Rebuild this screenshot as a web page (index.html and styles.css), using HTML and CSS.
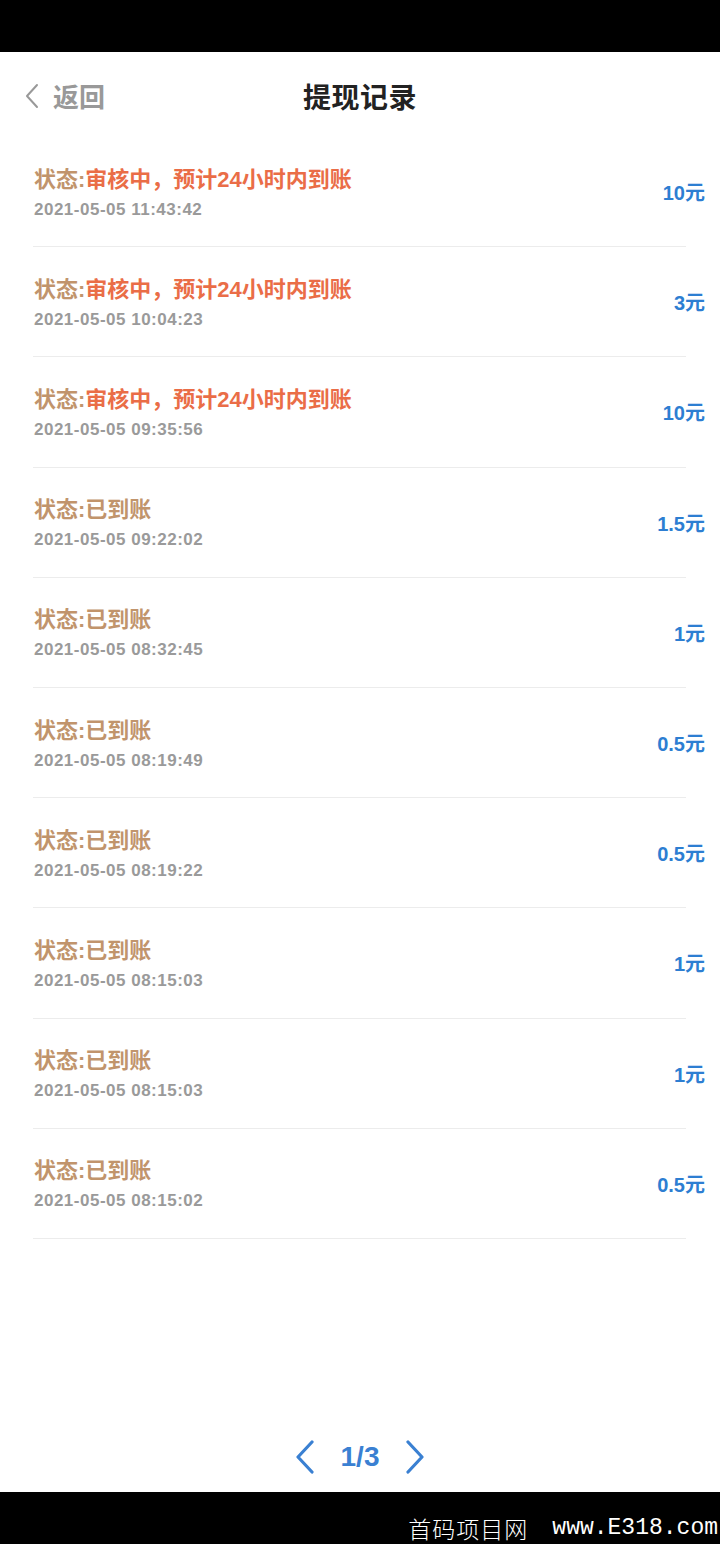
FILE: index.html
```html
<!DOCTYPE html>
<html lang="zh-CN">

<head>
  <meta charset="UTF-8">
  <meta name="viewport" content="width=device-width, initial-scale=1.0">
  <title>提现记录</title>
  <link rel="stylesheet" href="styles.css">
</head>

<body>
  <div class="page">
    <div class="statusbar"></div>

    <div class="header">
      <div class="back">
        <svg class="back-icon" width="16" height="26" viewBox="0 0 16 26">
          <path d="M13 2 L3 13 L13 24" fill="none" stroke="#999" stroke-width="2" stroke-linecap="round" stroke-linejoin="round" />
        </svg>
        <span>返回</span>
      </div>
      <div class="title">提现记录</div>
      <div></div>
    </div>

    <ul class="records">
      <li class="record">
        <div class="info">
          <div class="status">状态:<em class="pending">审核中，预计24小时内到账</em></div>
          <div class="time">2021-05-05 11:43:42</div>
        </div>
        <div class="amount">10元</div>
      </li>
      <li class="record">
        <div class="info">
          <div class="status">状态:<em class="pending">审核中，预计24小时内到账</em></div>
          <div class="time">2021-05-05 10:04:23</div>
        </div>
        <div class="amount">3元</div>
      </li>
      <li class="record">
        <div class="info">
          <div class="status">状态:<em class="pending">审核中，预计24小时内到账</em></div>
          <div class="time">2021-05-05 09:35:56</div>
        </div>
        <div class="amount">10元</div>
      </li>
      <li class="record">
        <div class="info">
          <div class="status">状态:<em>已到账</em></div>
          <div class="time">2021-05-05 09:22:02</div>
        </div>
        <div class="amount">1.5元</div>
      </li>
      <li class="record">
        <div class="info">
          <div class="status">状态:<em>已到账</em></div>
          <div class="time">2021-05-05 08:32:45</div>
        </div>
        <div class="amount">1元</div>
      </li>
      <li class="record">
        <div class="info">
          <div class="status">状态:<em>已到账</em></div>
          <div class="time">2021-05-05 08:19:49</div>
        </div>
        <div class="amount">0.5元</div>
      </li>
      <li class="record">
        <div class="info">
          <div class="status">状态:<em>已到账</em></div>
          <div class="time">2021-05-05 08:19:22</div>
        </div>
        <div class="amount">0.5元</div>
      </li>
      <li class="record">
        <div class="info">
          <div class="status">状态:<em>已到账</em></div>
          <div class="time">2021-05-05 08:15:03</div>
        </div>
        <div class="amount">1元</div>
      </li>
      <li class="record">
        <div class="info">
          <div class="status">状态:<em>已到账</em></div>
          <div class="time">2021-05-05 08:15:03</div>
        </div>
        <div class="amount">1元</div>
      </li>
      <li class="record">
        <div class="info">
          <div class="status">状态:<em>已到账</em></div>
          <div class="time">2021-05-05 08:15:02</div>
        </div>
        <div class="amount">0.5元</div>
      </li>
    </ul>

    <div class="pager">
      <svg width="20" height="34" viewBox="0 0 20 34">
        <path d="M17 2 L3 17 L17 32" fill="none" stroke="#3a80d2" stroke-width="3.2" stroke-linecap="round" stroke-linejoin="round" />
      </svg>
      <span class="page-num">1/3</span>
      <svg width="20" height="34" viewBox="0 0 20 34">
        <path d="M3 2 L17 17 L3 32" fill="none" stroke="#3a80d2" stroke-width="3.2" stroke-linecap="round" stroke-linejoin="round" />
      </svg>
    </div>

    <div class="navbar">
      <span class="mark-cn">首码项目网</span>
      <span class="mark-en">www.E318.com</span>
    </div>
  </div>
</body>

</html>
```

FILE: styles.css
```css
body {
  margin: 0;
  padding: 0;
  background: #fff;
  font-family: "Liberation Sans", "Noto Sans CJK SC", sans-serif;
}

.page {
  width: 720px;
  height: 1544px;
  display: flex;
  flex-direction: column;
  overflow: hidden;
}

.statusbar {
  height: 52px;
  background: #000;
  flex-shrink: 0;
}

.header {
  height: 85px;
  box-sizing: border-box;
  padding: 2px 0 0 0;
  display: grid;
  grid-template-columns: 1fr auto 1fr;
  align-items: center;
  flex-shrink: 0;
}

.back {
  display: flex;
  align-items: center;
  padding-left: 24px;
  color: #999;
  font-size: 26px;
  font-weight: bold;
}

.back-icon {
  margin-right: 13px;
}

.title {
  font-size: 28px;
  font-weight: bold;
  color: #222;
  letter-spacing: 0.5px;
}

.records {
  list-style: none;
  margin: 0;
  padding: 0 34px 0 33px;
}

.record {
  height: 110.2px;
  box-sizing: border-box;
  border-bottom: 1px solid #ececec;
  display: flex;
  align-items: center;
  justify-content: space-between;
}

.info {
  padding-top: 3px;
  padding-left: 1px;
}

.status {
  font-size: 22px;
  line-height: 28px;
  font-weight: bold;
  color: #c1946c;
}

.status em {
  font-style: normal;
}

.status .pending {
  color: #ea6d47;
}

.time {
  margin-top: 5px;
  font-size: 17px;
  line-height: 22px;
  font-weight: bold;
  letter-spacing: 0.5px;
  color: #9a9a9a;
}

.amount {
  margin-right: -19px;
  font-size: 20px;
  font-weight: bold;
  color: #2d7ed2;
}

.pager {
  margin-top: auto;
  margin-bottom: 10px;
  height: 50px;
  display: flex;
  align-items: center;
  justify-content: center;
  gap: 26px;
}

.page-num {
  font-size: 28px;
  font-weight: bold;
  color: #3a80d2;
}

.navbar {
  height: 52px;
  box-sizing: border-box;
  background: #000;
  flex-shrink: 0;
  display: flex;
  justify-content: flex-end;
  align-items: flex-end;
  padding: 0 2px 3px 0;
  color: #fff;
  font-size: 23px;
  line-height: 26px;
}

.mark-cn {
  font-family: "Noto Sans CJK SC", sans-serif;
  font-weight: 300;
  letter-spacing: 1px;
  margin-right: 24px;
}

.mark-en {
  font-family: "Liberation Mono", monospace;
}
```
